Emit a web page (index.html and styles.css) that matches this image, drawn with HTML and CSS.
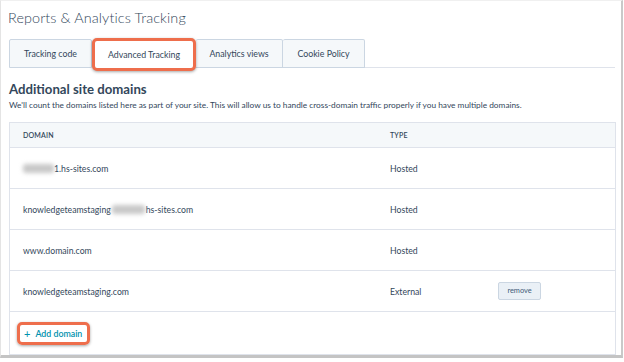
FILE: index.html
```html
<!DOCTYPE html>
<html>
<head>
<meta charset="utf-8">
<link rel="stylesheet" href="styles.css">
</head>
<body>
<div class="frame">
  <h1 class="title">Reports &amp; Analytics Tracking</h1>
  <div class="tabs">
    <div class="tab">Tracking code</div>
    <div class="tab active">Advanced Tracking</div>
    <div class="tab">Analytics views</div>
    <div class="tab">Cookie Policy</div>
    <div class="tab-rest"></div>
  </div>
  <h2 class="heading">Additional site domains</h2>
  <p class="desc">We'll count the domains listed here as part of your site. This will allow us to handle cross-domain traffic properly if you have multiple domains.</p>
  <div class="table">
    <div class="row head">
      <div class="c1">DOMAIN</div>
      <div class="c2">TYPE</div>
      <div class="c3"></div>
    </div>
    <div class="row">
      <div class="c1"><span class="blur w1"></span>1.hs-sites.com</div>
      <div class="c2">Hosted</div>
      <div class="c3"></div>
    </div>
    <div class="row">
      <div class="c1">knowledgeteamstaging<span class="blur w2"></span>hs-sites.com</div>
      <div class="c2">Hosted</div>
      <div class="c3"></div>
    </div>
    <div class="row">
      <div class="c1">www.domain.com</div>
      <div class="c2">Hosted</div>
      <div class="c3"></div>
    </div>
    <div class="row">
      <div class="c1">knowledgeteamstaging.com</div>
      <div class="c2">External</div>
      <div class="c3"><span class="btn">remove</span></div>
    </div>
    <div class="row foot">
      <span class="add"><span class="plus">+</span>Add domain</span>
    </div>
  </div>
</div>
</body>
</html>
```
FILE: styles.css
```css
html, body {
  margin: 0;
  padding: 0;
  background: #ffffff;
}
body {
  font-family: Lato, "Open Sans", sans-serif;
  color: #33475b;
  width: 624px;
  height: 362px;
  overflow: hidden;
}
.frame {
  box-sizing: border-box;
  width: 623px;
  height: 358px;
  border-left: 1px solid #e4e4e4;
  border-right: 2px solid #c9c9c9;
  border-bottom: 3px solid #c4c4c4;
  border-top: 1px solid #f0f0f0;
  padding: 0 6px 0 7px;
}
.title {
  margin: 6px 0 0 0;
  font-size: 14.4px;
  font-weight: 300;
  color: #33475b;
  line-height: 22px;
  letter-spacing: 0.1px;
}
.tabs {
  display: flex;
  margin-top: 10px;
  height: 29px;
  padding-left: 1px;
}
.tab {
  box-sizing: border-box;
  height: 29px;
  display: flex;
  align-items: center;
  justify-content: center;
  font-size: 8.8px;
  color: #33475b;
  background: #f5f8fa;
  border: 1px solid #cbd6e2;
  border-left: none;
  border-radius: 2px 2px 0 0;
}
.tab:first-child { border-left: 1px solid #cbd6e2; width: 83px; }
.tab:nth-child(2) { width: 104px; }
.tab:nth-child(3) { width: 87px; }
.tab:nth-child(4) { width: 82px; }
.tab.active {
  background: #ffffff;
  border: 3px solid #ee6e4c;
  border-radius: 5px;
  height: 33px;
  margin-top: -1px;
  position: relative;
  box-shadow: 0 1px 3px rgba(0,0,0,0.35);
  z-index: 1;
}
.tab-rest {
  flex: 1;
  border-bottom: 1px solid #dfe3eb;
}
.heading {
  margin: 13px 0 0 1px;
  font-size: 13.2px;
  font-weight: 700;
  color: #33475b;
  line-height: 16px;
}
.desc {
  margin: 2px 0 0 1px;
  font-size: 8.3px;
  line-height: 12px;
  color: #33475b;
}
.table {
  margin-top: 11px;
  margin-left: 1px;
  border: 1px solid #dfe3eb;
  width: 607px;
  box-sizing: border-box;
}
.row {
  display: flex;
  align-items: center;
  height: 40px;
  border-top: 1px solid #dfe3eb;
  font-size: 8.7px;
  color: #33475b;
}
.row.head {
  border-top: none;
  height: 24px;
  background: #f5f8fa;
  font-size: 7px;
  font-weight: 600;
  letter-spacing: 0.2px;
}
.c1 {
  width: 367px;
  padding-left: 13px;
  display: flex;
  align-items: center;
}
.c2 { width: 108px; }
.c3 { flex: 1; }
.blur {
  display: inline-block;
  height: 9px;
  background: #c8c8c8;
  filter: blur(2px);
  border-radius: 3px;
}
.w1 { width: 31px; }
.w2 { width: 33px; margin: 0 1px; }
.btn {
  display: inline-block;
  box-sizing: border-box;
  width: 43px;
  height: 18px;
  line-height: 16px;
  text-align: center;
  background: #eaf0f6;
  border: 1px solid #cbd6e2;
  border-radius: 2px;
  font-size: 7.4px;
  color: #425b76;
}
.row.foot {
  height: 42px;
  padding-left: 7px;
}
.add {
  display: inline-flex;
  align-items: center;
  box-sizing: border-box;
  height: 23px;
  padding: 0 5px 0 4px;
  border: 3px solid #ee6e4c;
  border-radius: 5px;
  box-shadow: 0 1px 3px rgba(0,0,0,0.35);
  color: #0091ae;
  font-size: 8.8px;
  font-weight: 600;
}
.plus {
  font-size: 11px;
  font-weight: 400;
  margin-right: 5px;
}
```
